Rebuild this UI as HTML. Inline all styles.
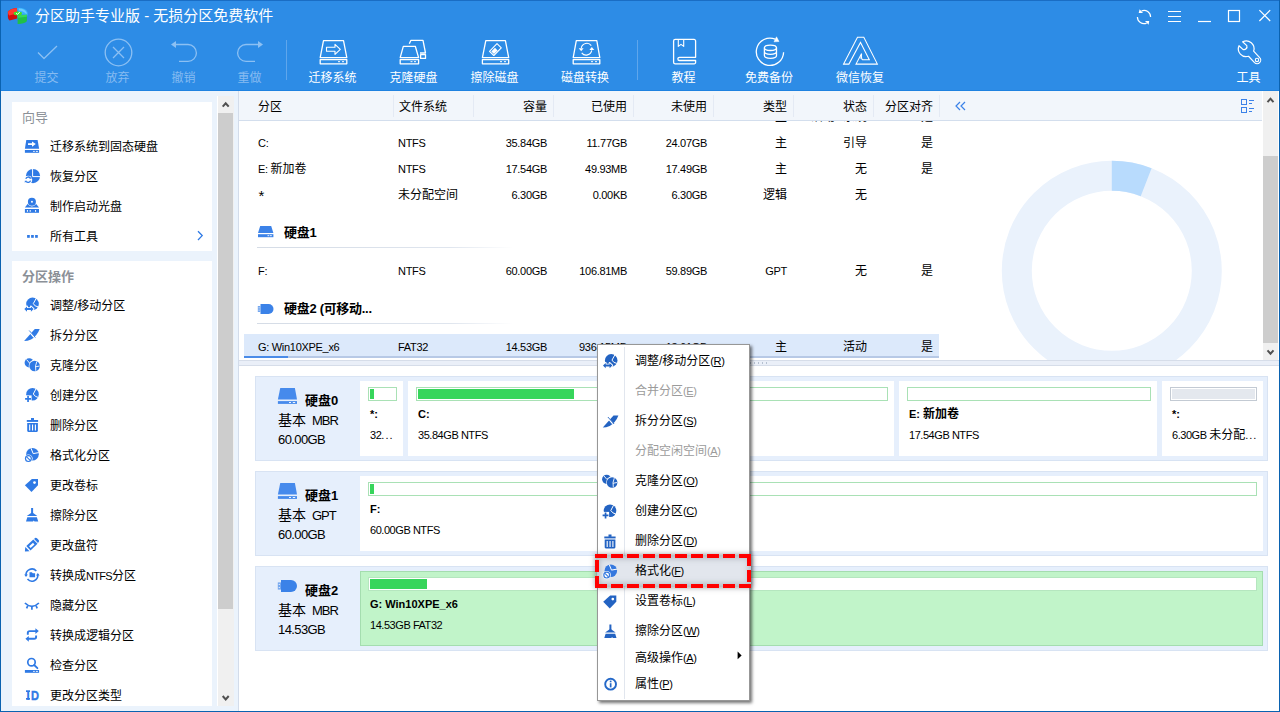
<!DOCTYPE html>
<html lang="zh-CN">
<head>
<meta charset="utf-8">
<title>分区助手专业版 - 无损分区免费软件</title>
<style>
*{box-sizing:border-box;margin:0;padding:0}
html,body{width:1280px;height:712px;overflow:hidden;background:#fff}
body{position:relative;font-family:"Liberation Sans","Noto Sans CJK SC",sans-serif;font-size:12px;color:#000}
.abs{position:absolute}
#win{position:absolute;left:0;top:0;width:1280px;height:712px;overflow:hidden;background:#fff}
/* top bar */
#top{position:absolute;left:0;top:0;width:1280px;height:91px;background:#2d8ce6;border-bottom:1px solid #1f82e0}
#title{position:absolute;left:35px;top:4px;height:24px;line-height:24px;font-size:15px;color:#fff;white-space:nowrap}
.tb{position:absolute;top:67px;height:22px;line-height:22px;font-size:12px;color:#fff;text-align:center;white-space:nowrap;transform:translateX(-50%)}
.tb.dis{color:#86bbf1}
.tsep{position:absolute;top:40px;width:1px;height:40px;background:#5fa6ec}
/* sidebar */
#side{position:absolute;left:1px;top:91px;width:237px;height:620px;background:#ebf3fc}
.panel{position:absolute;left:11px;width:200px;background:#fff}
.ptitle{position:absolute;left:10px;top:6px;height:20px;line-height:20px;font-size:13px;color:#8b9097;white-space:nowrap}
.si{position:absolute;left:38px;margin-top:1px;height:20px;line-height:20px;font-size:12px;color:#000;white-space:nowrap}
.sic{position:absolute;left:11px;width:18px;height:18px}
/* scrollbars */
.sb{position:absolute;background:#f0f0f0}
.thumb{position:absolute;background:#cdcdcd}
/* table */
#thead{position:absolute;left:239px;top:91px;width:1023px;height:30px;background:#f2f6fb;border-bottom:1px solid #d3deed}
.th{position:absolute;top:6px;height:20px;line-height:20px;font-size:12px;white-space:nowrap}
.cs{position:absolute;top:4px;width:1px;height:22px;background:#e4eaf4}
.td{position:absolute;height:20px;line-height:20px;font-size:11px;white-space:nowrap}
.td.c{font-size:12px}
.r{text-align:right}
.dh{font-size:13px;font-weight:bold}
.dpanel{position:absolute;left:255px;width:1013px;height:85px;background:#e6effc;border:1px solid #d8e3f3}
.dn{position:absolute;margin-top:1px;height:20px;line-height:20px;font-size:13px;font-weight:bold;white-space:nowrap}
.dt{position:absolute;height:20px;line-height:20px;font-size:14px;white-space:nowrap}
.dt .l{font-size:13px;letter-spacing:-0.9px;margin-left:2px}
.ds{position:absolute;height:20px;line-height:20px;font-size:13px;letter-spacing:-0.6px;white-space:nowrap}
.pbox{position:absolute;height:75px;background:#fff;overflow:hidden}
.bar{position:absolute;left:8px;right:6px;top:6px;height:14px;border:1px solid #a9e1b5;background:#fff}
.pbox[style*="border"] .bar{right:5px}
.fill{position:absolute;left:1px;top:1px;height:10px;background:#37d55b}
.pl{position:absolute;left:10px;top:23px;height:20px;line-height:20px;font-size:11px;font-weight:bold;white-space:nowrap}
.pd{position:absolute;left:10px;top:44px;height:20px;line-height:20px;font-size:11px;letter-spacing:-0.45px;white-space:nowrap}
.cj{font-size:12px;letter-spacing:0}
.td{letter-spacing:-0.3px}
.td.c,.td .c{letter-spacing:0}
#menu{position:absolute;left:597px;top:344px;width:153px;height:357px;background:#fff;border:1px solid #979797;box-shadow:2px 2px 3px rgba(0,0,0,0.55)}
.mi{position:absolute;left:37px;height:20px;line-height:20px;font-size:12px;white-space:nowrap}
.mi.d{color:#9b9b9b}
.mi .k{font-size:11px;letter-spacing:-0.4px}
.hl{position:absolute;left:-1px;top:211px;width:154px;height:30px;background:#e2e6ed;box-shadow:0 0 5px 2px rgba(90,95,105,0.55), inset 0 0 6px 2px rgba(120,128,140,0.5)}
</style>
</head>
<body>
<div id="win">
<!--TOP-->
<div id="top">
<svg class="abs" style="left:7px;top:7px" width="22" height="18" viewBox="0 0 22 18">
<path d="M10.2 0.7 Q19.4 0.4 20.7 5.6 L20.7 8.6 L10.6 6.6 Z" fill="#36b2fb"/>
<path d="M12 1.6 Q17.6 1.8 19.6 5.4 L19.6 7.6 Q17 4 12 3.4 Z" fill="#6ccbff"/>
<path d="M0.9 4.8 Q3 1.6 9.8 0.9 L10.4 6.5 L10.2 11.4 L2.6 13.6 Q0.9 12 0.9 10 Z" fill="#d20d0d"/>
<path d="M0.9 4.8 Q3 1.6 9.8 0.9 L10.4 6.5 L2.2 8.6 Q0.9 7 0.9 4.8 Z" fill="#ff3a2e"/>
<path d="M10.6 8.2 L20 7.8 L19.9 14.2 Q17 17 10.6 16.9 Z" fill="#20c048"/>
<path d="M10.6 8.2 L20 7.8 L19.9 9.8 L10.6 10.8 Z" fill="#35d75c"/>
<ellipse cx="10.8" cy="6.4" rx="4.2" ry="1.9" fill="#45e023"/>
<path d="M9 6.2 L10.3 7.4 L12.8 5.2" fill="none" stroke="#fff" stroke-width="1"/>
</svg>
<div id="title">分区助手专业版 - 无损分区免费软件</div>
<!-- window controls -->
<svg class="abs" style="left:1130px;top:4px" width="146" height="24" viewBox="1130 4 146 24" fill="none" stroke="#fff" stroke-width="1.2">
<path d="M1141.6 10.9 A6.6 6.6 0 0 1 1150.6 17"/><path d="M1138.7 13 L1143 13 L1139.6 9.2 Z" fill="#fff" stroke="none"/>
<path d="M1137.4 17 A6.6 6.6 0 0 0 1146.6 23.1"/><path d="M1145 21 L1149.2 21 L1148.6 24.8 Z" fill="#fff" stroke="none"/>
<path d="M1168 11.5 H1181 M1168 16.5 H1181 M1168 21.5 H1181"/>
<path d="M1198 21.5 H1211"/>
<rect x="1228.5" y="10.5" width="11" height="11"/>
<path d="M1259.4 10.2 L1270.2 21 M1270.2 10.2 L1259.4 21"/>
</svg>
<!-- toolbar icons -->
<svg class="abs" style="left:0;top:34px" width="1280" height="34" viewBox="0 34 1280 34" fill="none" stroke="#fff" stroke-width="1.3" stroke-linejoin="round">
<g stroke="#8cc0f3">
<path d="M38 52.5 L44 58.5 L57 46"/>
<circle cx="118.5" cy="52.5" r="13.3"/><path d="M113 47 L124 58 M124 47 L113 58"/>
<path d="M175 44.5 H188 A8.4 8.4 0 0 1 188 61.3 H179"/><path d="M171 44.5 L176 41 V48 Z" fill="#8cc0f3" stroke="none"/>
<path d="M259 44.5 H246 A8.4 8.4 0 0 0 246 61.3 H255"/><path d="M263 44.5 L258 41 V48 Z" fill="#8cc0f3" stroke="none"/>
</g>
<!-- migrate -->
<path d="M323.5 40.7 H343.5 L346.8 57.6 H320.2 Z"/><rect x="320.2" y="59.6" width="26.6" height="4.2"/><path d="M338 61.7 h2 M342 61.7 h2" stroke-width="1"/>
<path d="M326.5 47.3 H335 V44.3 L340.3 49.3 L335 54.3 V51.3 H326.5 Z" stroke-width="1.1"/>
<!-- clone -->
<path d="M403.3 46.3 H415.3 L418.6 57.6 H400.2 Z"/><rect x="400.2" y="59.6" width="18.4" height="4.2"/><path d="M410.5 61.7 h2 M414 61.7 h2" stroke-width="1"/>
<path d="M409.3 43.8 L410.8 40.4 H423 L425.5 53 H420"/><rect x="420.6" y="54.6" width="4.9" height="3.8"/>
<!-- erase -->
<path d="M485.8 40.7 H505.4 L508.7 57.6 H482.4 Z"/><rect x="482.4" y="59.6" width="26.3" height="4.2"/><path d="M500 61.7 h2 M504 61.7 h2" stroke-width="1"/>
<path d="M489.5 51.3 L497 43.6 L501.3 47.8 L493.8 55.5 Z" stroke-width="1.1"/><path d="M491.3 51.4 L495 47.8 L497.6 50.4 L494 54 Z" fill="#fff" stroke="none"/>
<!-- convert -->
<path d="M576.3 40.7 H596.8 L599.8 57.6 H573.2 Z"/><rect x="573.2" y="59.6" width="26.6" height="4.2"/><path d="M591 61.7 h2 M595 61.7 h2" stroke-width="1"/>
<path d="M581.3 48 A5.6 5.6 0 0 1 591.3 45.6" stroke-width="1.1"/><path d="M578.7 48.3 L583.6 48.3 L581.2 51.3 Z" fill="#fff" stroke="none"/>
<path d="M591.7 50.4 A5.6 5.6 0 0 1 581.7 52.8" stroke-width="1.1"/><path d="M594.3 50.1 L589.4 50.1 L591.8 47.1 Z" fill="#fff" stroke="none"/>
<!-- book -->
<path d="M695.6 57.3 H679.5 A1.6 1.6 0 0 0 679.5 60.5 H695.6 V62.4 A1.4 1.4 0 0 1 694.2 63.8 H675.2 A1.6 1.6 0 0 1 673.6 62.2 V41 A1.6 1.6 0 0 1 675.2 39.4 H694 A1.6 1.6 0 0 1 695.6 41 Z"/>
<path d="M678.3 39.6 V46.4 L681 44.4 L683.7 46.4 V39.6" stroke-width="1.1"/>
<!-- backup -->
<path d="M783.6 52.2 A13.65 13.65 0 1 1 775.2 39.2"/><path d="M776.5 36.8 L779 41.5 L774 41.8 Z" fill="#fff" stroke="#fff" stroke-width="0.5"/>
<ellipse cx="770.45" cy="47.8" rx="6.05" ry="2.7"/><path d="M764.4 47.8 V55.6 A6.05 2.7 0 0 0 776.5 55.6 V47.8 M764.4 51.6 A6.05 2.7 0 0 0 776.5 51.6"/>
<!-- A -->
<path d="M843.6 64.1 L857.5 37.3 H863.8 L877.4 64.1 H856 L861.6 53.6 Q861 58.4 862.6 59.8 H869.3 L860.5 42.4 L848.9 64.1 Z" stroke-width="1.05" stroke-linejoin="miter"/>
<path d="M861.6 53.6 Q861 58.4 862.6 59.8 Q859.6 59 859.4 57.6 Z" fill="#fff" fill-opacity="0.6" stroke="none"/>
<!-- wrench -->
<path d="M1242.6 41.8 A7.8 7.8 0 0 1 1253.64 51.14 L1259.65 57.55 A3.6 3.6 0 0 1 1254.55 62.65 L1248.54 56.24 A7.8 7.8 0 0 1 1239 45.7 L1242.9 49.4 A3 3 0 0 0 1246.8 45.6 Z" stroke-width="1.2"/>
<circle cx="1257" cy="59.9" r="1.7" stroke-width="1.1"/>
</svg>
<div class="tsep" style="left:286px"></div><div class="tsep" style="left:637px"></div>
<div class="tb dis" style="left:46.5px">提交</div>
<div class="tb dis" style="left:117.5px">放弃</div>
<div class="tb dis" style="left:183.5px">撤销</div>
<div class="tb dis" style="left:249.5px">重做</div>
<div class="tb" style="left:332.5px">迁移系统</div>
<div class="tb" style="left:413.5px">克隆硬盘</div>
<div class="tb" style="left:494.5px">擦除磁盘</div>
<div class="tb" style="left:585px">磁盘转换</div>
<div class="tb" style="left:683.5px">教程</div>
<div class="tb" style="left:769px">免费备份</div>
<div class="tb" style="left:860px">微信恢复</div>
<div class="tb" style="left:1248.5px">工具</div>
</div>
<div class="abs" style="left:0;top:0;width:1280px;height:1px;background:#1a6dc4"></div>
<div class="abs" style="left:0;top:0;width:1px;height:712px;background:#0a62b0"></div>
<div class="abs" style="left:1279px;top:0;width:1px;height:712px;background:#0a62b0"></div>
<div class="abs" style="left:0;top:711px;width:1280px;height:1px;background:#0a62b0"></div>
<!--/TOP-->
<!--SIDE-->
<div class="abs" style="left:1px;top:91px;width:237px;height:620px;background:#ebf3fc"></div>
<div class="abs" style="left:12px;top:102px;width:200px;height:149px;background:#fff"></div>
<div class="abs" style="left:12px;top:261px;width:200px;height:445px;background:#fff"></div>
<div class="abs" style="left:217px;top:96px;width:1px;height:610px;background:#fff"></div>
<div class="sb" style="left:218px;top:96px;width:16px;height:610px"></div>
<div class="thumb" style="left:218px;top:113px;width:15px;height:496px"></div>
<svg class="abs" style="left:218px;top:96px" width="16" height="610" viewBox="0 0 16 610" fill="none" stroke="#505050" stroke-width="2"><path d="M4.7 10.7 L7.7 7.3 L10.7 10.7"/><path d="M4.7 600 L7.7 603.4 L10.7 600"/></svg>
<div class="abs" style="left:238px;top:91px;width:1px;height:620px;background:#d3dcea"></div>
<div class="ptitle" style="left:22px;top:108px">向导</div>
<div class="ptitle" style="left:22px;top:267px;font-weight:bold">分区操作</div>
<div class="si" style="left:50px;top:136px">迁移系统到固态硬盘</div>
<div class="si" style="left:50px;top:166px">恢复分区</div>
<div class="si" style="left:50px;top:196px">制作启动光盘</div>
<div class="si" style="left:50px;top:226px">所有工具</div>
<div class="si" style="left:50px;top:295px">调整/移动分区</div>
<div class="si" style="left:50px;top:325px">拆分分区</div>
<div class="si" style="left:50px;top:355px">克隆分区</div>
<div class="si" style="left:50px;top:385px">创建分区</div>
<div class="si" style="left:50px;top:415px">删除分区</div>
<div class="si" style="left:50px;top:445px">格式化分区</div>
<div class="si" style="left:50px;top:475px">更改卷标</div>
<div class="si" style="left:50px;top:505px">擦除分区</div>
<div class="si" style="left:50px;top:535px">更改盘符</div>
<div class="si" style="left:50px;top:565px">转换成<span style="font-size:11px;letter-spacing:-0.7px">NTFS</span>分区</div>
<div class="si" style="left:50px;top:595px">隐藏分区</div>
<div class="si" style="left:50px;top:625px">转换成逻辑分区</div>
<div class="si" style="left:50px;top:655px">检查分区</div>
<div class="si" style="left:50px;top:685px">更改分区类型</div>
<svg class="abs" style="left:0;top:91px;color:#2f7ae5" width="240" height="621" viewBox="0 91 240 621">
<defs>
<g id="i-pie"><circle cx="0" cy="0" r="6.3" fill="currentColor"/></g>
<g id="i-resize" fill="currentColor"><circle cx="32.5" cy="303.9" r="6.3"/><path d="M36.2 298.4 L33.3 303.6 Q34.6 306.6 38.3 306.9" stroke="#fff" stroke-width="1" fill="none"/><path d="M24.3 309 L27 306.4 V308.1 H30.9 V306.4 L33.6 309 L30.9 311.7 V310 H27 V311.7 Z" stroke="#fff" stroke-width="1.8" stroke-linejoin="round"/><path d="M24.3 309 L27 306.4 V308.1 H30.9 V306.4 L33.6 309 L30.9 311.7 V310 H27 V311.7 Z"/></g>
<g id="i-split" fill="currentColor"><path d="M24.1 341 L34.8 329 L39.7 328.9 Q37 336 31 339.4 Q27.4 341 24.1 341 Z"/><path d="M29.4 331.8 L34.1 337.1" stroke="#fff" stroke-width="1.6"/><path d="M29.2 330.5 L35.4 337.5" stroke="currentColor" stroke-width="0.9"/></g>
<g id="i-clone" fill="currentColor"><circle cx="29.2" cy="362.8" r="4.6"/><path d="M26.5 359.5 L29.5 363 M29.5 363 L33 360" stroke="#fff" stroke-width="0.9" fill="none"/><circle cx="34.6" cy="366" r="5.9" fill="#fff"/><circle cx="34.6" cy="366" r="5.3"/><path d="M36.8 361.6 Q34.8 365.6 35.8 370.8 M35.4 366.8 L39.6 366" stroke="#fff" stroke-width="0.9" fill="none"/></g>
<g id="i-create" fill="currentColor"><circle cx="32.5" cy="394.2" r="6.3"/><path d="M36 388.8 L33.3 394 Q35 397 38.2 397.4" stroke="#fff" stroke-width="1" fill="none"/><path d="M24.4 395.4 H31.6 V402.4 H24.4 Z" fill="#fff"/><path d="M27.2 396 H28.9 V398.1 H31 V399.8 H28.9 V401.9 H27.2 V399.8 H25.1 V398.1 H27.2 Z"/></g>
<g id="i-trash" fill="currentColor"><rect x="31" y="418" width="3" height="2.4"/><rect x="26.8" y="420" width="11.3" height="1.9"/><path d="M27.2 423 H37.9 V430.8 Q37.9 431.9 36.8 431.9 H28.3 Q27.2 431.9 27.2 430.8 Z"/><path d="M29.7 424.4 V430.4 M32.55 424.4 V430.4 M35.4 424.4 V430.4" stroke="#fff" stroke-width="1.1"/></g>
<g id="i-format" fill="currentColor"><circle cx="32.5" cy="454.2" r="6.3"/><path d="M31 448.2 L33.2 453.6 L38.8 452.6" stroke="#fff" stroke-width="1" fill="none"/><circle cx="28.4" cy="458.6" r="4.2" fill="#fff"/><circle cx="28.4" cy="458.6" r="3.5"/><circle cx="28.4" cy="458.6" r="2.3" fill="#fff"/><path d="M26.6 456.9 L30.2 460.3" stroke="currentColor" stroke-width="1.1"/></g>
<g id="i-tag" fill="currentColor"><path d="M24.9 485.3 L31.9 479.1 H38 V485.2 L31.5 491.9 Z"/><circle cx="34.5" cy="482.6" r="1.35" fill="#fff"/></g>
<g id="i-wipe" fill="currentColor"><rect x="31.1" y="508" width="2" height="6"/><path d="M26.8 515.9 L31.4 512.8 H32.8 L37.3 515.9 Z"/><path d="M27.3 517.3 H36.9 L38.2 521.6 H34.5 L33.8 520.6 L33 521.6 H26 Z"/></g>
</defs>
<g fill="#2f7ae5">
<!-- migrate -->
<path d="M26.3 139.9 H37.6 L39.1 148.7 H24.9 Z"/><rect x="24.9" y="150" width="14.2" height="2.8"/><path d="M33.1 151.4 h1.7 M35.9 151.4 h2" stroke="#fff" stroke-width="0.9"/>
<path d="M28 143.2 H32 V141.4 L35.8 144.1 L32 146.8 V145 H28 Z" fill="#fff"/>
<!-- recover -->
<circle cx="33" cy="176.1" r="7.1"/><path d="M32.6 168.6 V176.6 H40.4" stroke="#fff" stroke-width="1" fill="none"/>
<circle cx="28.2" cy="179.7" r="4" fill="#fff"/><path d="M25.8 178.8 A2.6 2.6 0 0 1 30.3 178 M30.6 180.6 A2.6 2.6 0 0 1 26.1 181.4" stroke="#2f7ae5" stroke-width="1.3" fill="none"/><path d="M29.3 178.7 H31.6 V176.6 Z M27.1 180.7 H24.8 V182.8 Z"/>
<!-- boot disc -->
<path d="M24.9 207.5 L28 203.6 H35.8 L39 207.5 Z"/><circle cx="31.9" cy="201.7" r="4.7" fill="#fff"/><circle cx="31.9" cy="201.7" r="4"/><rect x="31.1" y="200.9" width="1.7" height="1.7" fill="#fff"/>
<rect x="24.9" y="209" width="14.1" height="3.8"/><path d="M27.4 210 v1.8 M30.2 210 v1.8 M35.6 210 v1.8" stroke="#fff" stroke-width="1"/>
<!-- dots -->
<rect x="27.1" y="235" width="2.7" height="2.8"/><rect x="31.1" y="235" width="2.7" height="2.8"/><rect x="35.1" y="235" width="2.7" height="2.8"/>
<path d="M198 231.2 L202.2 235.6 L198 240" stroke="#2f7ae5" stroke-width="1.3" fill="none"/>
</g>
<use href="#i-resize"/><use href="#i-split"/><use href="#i-clone"/><use href="#i-create"/><use href="#i-trash"/><use href="#i-format"/><use href="#i-tag"/><use href="#i-wipe"/>
<g fill="#2f7ae5">
<!-- pencil -->
<path d="M24.9 551.5 L25.3 547 L29.6 551.2 Z"/><path d="M26.3 545.9 L33.3 539.6 L37.5 543.8 L30.5 550.5 Z"/><path d="M29.1 546.3 L33 542.8 L34.5 544.4 L30.6 547.9 Z" fill="#fff"/><path d="M34.1 538.9 L35 538.1 Q36 537.4 37 538.3 L38.7 540 Q39.5 541 38.7 542 L38 542.9 Z"/>
<!-- ntfs -->
<path d="M26.05 575.4 A5.85 5.85 0 0 1 36.3 571 M37.75 574.7 A5.85 5.85 0 0 1 27.5 579.1" stroke="#2f7ae5" stroke-width="1.6" fill="none"/><path d="M24.2 574.6 H27.9 L26 577.1 Z M36 575.5 H39.7 L37.8 573 Z"/><path d="M29.5 572.3 H31.9 L32.7 573.3 H35.1 V577.2 H29.5 Z"/>
<!-- hide -->
<path d="M24.9 603 Q31.9 609.8 38.9 603 M27.6 606 L26.6 608.4 M31.9 607 V609.8 M36.2 606 L37.2 608.4" stroke="#2f7ae5" stroke-width="1.7" fill="none"/>
<!-- logical -->
<path d="M27.8 634.8 V633 Q27.8 631.1 29.7 631.1 H36 M36.1 635.4 V637 Q36.1 638.8 34.2 638.8 H28" stroke="#2f7ae5" stroke-width="1.9" fill="none"/><path d="M35.4 628.2 L38.8 631.1 L35.4 634 Z M28.8 635.9 L25.4 638.8 L28.8 641.7 Z"/>
<!-- check -->
<circle cx="31.5" cy="662.2" r="3.7" stroke="#2f7ae5" stroke-width="1.7" fill="none"/><path d="M34.2 665 L37.4 668.2" stroke="#2f7ae5" stroke-width="1.8" stroke-linecap="round"/><rect x="24.9" y="670" width="14.2" height="2.8"/><path d="M33.1 671.4 h1.7 M35.9 671.4 h2" stroke="#fff" stroke-width="0.9"/>
<text x="26.2" y="699.7" font-family="Liberation Sans, sans-serif" font-weight="bold" font-size="13.1" fill="#2f7ae5">I</text><rect x="26" y="690.3" width="4" height="1.7"/><rect x="26" y="698" width="4" height="1.7"/><text x="30.9" y="699.7" font-family="Liberation Sans, sans-serif" font-weight="bold" font-size="13.1" textLength="8" lengthAdjust="spacingAndGlyphs" fill="#2f7ae5" stroke="#2f7ae5" stroke-width="0.4">D</text>
</g>
</svg>
<!--/SIDE-->
<!--TABLE-->
<div id="thead">
<div class="cs" style="left:154px"></div><div class="cs" style="left:234px"></div><div class="cs" style="left:314px"></div><div class="cs" style="left:394px"></div><div class="cs" style="left:474px"></div><div class="cs" style="left:554px"></div><div class="cs" style="left:634px"></div><div class="cs" style="left:700px"></div>
<div class="th" style="left:19px">分区</div>
<div class="th" style="left:160px">文件系统</div>
<div class="th r" style="left:234px;width:74px">容量</div>
<div class="th r" style="left:314px;width:74px">已使用</div>
<div class="th r" style="left:394px;width:74px">未使用</div>
<div class="th r" style="left:474px;width:74px">类型</div>
<div class="th r" style="left:554px;width:74px">状态</div>
<div class="th" style="left:646px">分区对齐</div>
<svg class="abs" style="left:715px;top:10px" width="14" height="10" viewBox="0 0 14 10" fill="none" stroke="#3b82e8" stroke-width="1.2"><path d="M6 1 L2 5 L6 9 M11 1 L7 5 L11 9"/></svg>
<svg class="abs" style="left:1001px;top:7px" width="16" height="16" viewBox="0 0 16 16" fill="none" stroke="#3b82e8" stroke-width="1"><rect x="1.5" y="1.5" width="5" height="5"/><rect x="1.5" y="9.5" width="5" height="5"/><path d="M9 2.5 h5 M9 5.5 h3 M9 10.5 h5 M9 13.5 h3" stroke-width="1.1"/></svg>
</div>
<div id="tbody" class="abs" style="left:239px;top:121px;width:1023px;height:239px;overflow:hidden;background:#fff">
<svg class="abs" style="left:747px;top:30px" width="250" height="240" viewBox="986 151 250 240"><circle cx="1111.8" cy="270.8" r="95" fill="none" stroke="#eaf2fc" stroke-width="30"/><path d="M1111.8 160.8 A110 110 0 0 1 1151.6 168.2 L1140.7 196.2 A80 80 0 0 0 1111.8 190.8 Z" fill="#b8dbfd"/></svg>
<div class="sel abs" style="left:5px;top:213px;width:695px;height:24px;background:#dce9fb"></div>
<div class="abs" style="left:5px;top:235px;width:695px;height:2px;background:#b7c9e6"></div>
<div class="abs" style="left:5px;top:235px;width:44px;height:2px;background:#4a8be8"></div>
<!-- clipped row -->
<div class="td c r" style="left:474px;top:-14px;width:74px">主</div><div class="td c r" style="left:534px;top:-14px;width:94px">活动&amp;系统</div><div class="td c" style="left:682px;top:-14px">是</div>
<!-- C -->
<div class="td" style="left:19px;top:12px">C:</div><div class="td" style="left:159px;top:12px">NTFS</div><div class="td r" style="left:234px;top:12px;width:74px">35.84GB</div><div class="td r" style="left:314px;top:12px;width:74px">11.77GB</div><div class="td r" style="left:394px;top:12px;width:74px">24.07GB</div><div class="td c r" style="left:474px;top:12px;width:74px">主</div><div class="td c r" style="left:554px;top:12px;width:74px">引导</div><div class="td c" style="left:682px;top:12px">是</div>
<!-- E -->
<div class="td" style="left:19px;top:38px">E: <span class="c" style="font-size:12px">新加卷</span></div><div class="td" style="left:159px;top:38px">NTFS</div><div class="td r" style="left:234px;top:38px;width:74px">17.54GB</div><div class="td r" style="left:314px;top:38px;width:74px">49.93MB</div><div class="td r" style="left:394px;top:38px;width:74px">17.49GB</div><div class="td c r" style="left:474px;top:38px;width:74px">主</div><div class="td c r" style="left:554px;top:38px;width:74px">无</div><div class="td c" style="left:682px;top:38px">是</div>
<!-- * -->
<div class="td" style="left:19.5px;top:64.5px;font-size:15px">*</div><div class="td c" style="left:159px;top:64px">未分配空间</div><div class="td r" style="left:234px;top:64px;width:74px">6.30GB</div><div class="td r" style="left:314px;top:64px;width:74px">0.00KB</div><div class="td r" style="left:394px;top:64px;width:74px">6.30GB</div><div class="td c r" style="left:474px;top:64px;width:74px">逻辑</div><div class="td c r" style="left:554px;top:64px;width:74px">无</div>
<!-- disk1 -->
<svg class="abs" style="left:18px;top:104px" width="18" height="14" viewBox="0 0 18 14" fill="#3b82e8"><path d="M3.2 1 H14.2 L16.4 8 H1 Z"/><rect x="1" y="9.2" width="15.4" height="3"/><path d="M10.5 10.7 h1.8 M13 10.7 h1.8" stroke="#fff" stroke-width="0.9"/></svg>
<div class="td dh" style="left:45px;top:102px">硬盘1</div>
<div class="abs" style="left:18px;top:126px;width:256px;height:1px;background:linear-gradient(90deg,#d5dce6 0%,#dfe5ee 75%,#fff 100%)"></div>
<div class="td" style="left:19px;top:140px">F:</div><div class="td" style="left:159px;top:140px">NTFS</div><div class="td r" style="left:234px;top:140px;width:74px">60.00GB</div><div class="td r" style="left:314px;top:140px;width:74px">106.81MB</div><div class="td r" style="left:394px;top:140px;width:74px">59.89GB</div><div class="td r" style="left:474px;top:140px;width:74px">GPT</div><div class="td c r" style="left:554px;top:140px;width:74px">无</div><div class="td c" style="left:682px;top:140px">是</div>
<!-- disk2 -->
<svg class="abs" style="left:18px;top:182px" width="18" height="12" viewBox="0 0 18 12" fill="#3b82e8"><path d="M3.5 1 H11.5 A5 5 0 0 1 11.5 11 H3.5 Z"/><rect x="0.8" y="3" width="2.7" height="6" fill="#74a7ef"/><path d="M1.6 4.8 h1 M1.6 7.2 h1" stroke="#fff" stroke-width="0.8"/></svg>
<div class="td dh" style="left:45px;top:178px">硬盘2 (可移动...</div>
<div class="abs" style="left:18px;top:202px;width:256px;height:1px;background:linear-gradient(90deg,#d5dce6 0%,#dfe5ee 75%,#fff 100%)"></div>
<div class="td" style="left:19px;top:216px">G: Win10XPE_x6</div><div class="td" style="left:159px;top:216px">FAT32</div><div class="td r" style="left:234px;top:216px;width:74px">14.53GB</div><div class="td" style="left:340px;top:216px">936.15MB</div><div class="td r" style="left:394px;top:216px;width:74px">13.61GB</div><div class="td c r" style="left:474px;top:216px;width:74px">主</div><div class="td c r" style="left:554px;top:216px;width:74px">活动</div><div class="td c" style="left:682px;top:216px">是</div>
</div>
<!-- right scrollbar -->
<div class="sb" style="left:1263px;top:91px;width:15px;height:269px"></div>
<div class="thumb" style="left:1263px;top:156px;width:15px;height:187px"></div>
<svg class="abs" style="left:1263px;top:91px" width="15" height="269" viewBox="0 0 15 269" fill="none" stroke="#505050" stroke-width="2"><path d="M4.5 11.1 L7.5 7.7 L10.5 11.1"/><path d="M4.5 259.3 L7.5 262.7 L10.5 259.3"/></svg>
<!-- splitter -->
<div class="abs" style="left:239px;top:360px;width:1040px;height:6px;background:#eaeff8;border-top:1px solid #d6dde9;border-bottom:1px solid #d6dde9"></div>
<div class="abs" style="left:750px;top:362px;width:1px;height:2px;background:#b5c0d0;box-shadow:4px 0 0 #b5c0d0,8px 0 0 #b5c0d0,12px 0 0 #b5c0d0,16px 0 0 #b5c0d0"></div>
<!--/TABLE-->
<!--DISKS-->
<div class="dpanel" style="top:376px"></div>
<div class="dpanel" style="top:471px"></div>
<div class="dpanel" style="top:566px"></div>
<!-- disk0 -->
<svg class="abs" style="left:277px;top:387px" width="21" height="18" viewBox="0 0 21 18" fill="#468aec"><path d="M3.25 0.9 H17.9 L20 12.6 H0.9 Z"/><rect x="0.9" y="14.1" width="19.1" height="2.8"/><path d="M12 15.5 h2 M15.8 15.5 h2.4" stroke="#fff" stroke-width="0.9"/></svg>
<div class="dn" style="left:305px;top:390px">硬盘0</div>
<div class="dt" style="left:278px;top:410px">基本 <span class="l">MBR</span></div>
<div class="ds" style="left:278px;top:430px">60.00GB</div>
<div class="pbox" style="left:360px;top:381px;width:43px"><div class="bar"><div class="fill" style="width:4px"></div></div><div class="pl">*:</div><div class="pd">32<span style="letter-spacing:1px">...</span></div></div>
<div class="pbox" style="left:408px;top:381px;width:486px"><div class="bar"><div class="fill" style="width:156px"></div></div><div class="pl">C:</div><div class="pd">35.84GB NTFS</div></div>
<div class="pbox" style="left:899px;top:381px;width:258px"><div class="bar"></div><div class="pl">E: <span class="cj">新加卷</span></div><div class="pd">17.54GB NTFS</div></div>
<div class="pbox" style="left:1162px;top:381px;width:101px"><div class="bar" style="background:#e4e8ee;border-color:#c3cad3;box-shadow:inset 0 0 0 1px #fff"></div><div class="pl">*:</div><div class="pd">6.30GB <span class="cj">未分配</span><span style="letter-spacing:1px">...</span></div></div>
<!-- disk1 -->
<svg class="abs" style="left:277px;top:482px" width="21" height="18" viewBox="0 0 21 18" fill="#468aec"><path d="M3.25 0.9 H17.9 L20 12.6 H0.9 Z"/><rect x="0.9" y="14.1" width="19.1" height="2.8"/><path d="M12 15.5 h2 M15.8 15.5 h2.4" stroke="#fff" stroke-width="0.9"/></svg>
<div class="dn" style="left:305px;top:485px">硬盘1</div>
<div class="dt" style="left:278px;top:505px">基本 <span class="l">GPT</span></div>
<div class="ds" style="left:278px;top:525px">60.00GB</div>
<div class="pbox" style="left:360px;top:476px;width:903px"><div class="bar"><div class="fill" style="width:4px"></div></div><div class="pl">F:</div><div class="pd">60.00GB NTFS</div></div>
<!-- disk2 -->
<svg class="abs" style="left:277px;top:579px" width="22" height="14" viewBox="0 0 22 14" fill="#3b82e8"><path d="M4 1 H14 A6 6 0 0 1 14 13 H4 Z"/><rect x="0.8" y="3.4" width="3.2" height="7.2" fill="#74a7ef"/><path d="M1.7 5.4 h1.2 M1.7 8.6 h1.2" stroke="#fff" stroke-width="0.9"/></svg>
<div class="dn" style="left:305px;top:580px">硬盘2</div>
<div class="dt" style="left:278px;top:600px">基本 <span class="l">MBR</span></div>
<div class="ds" style="left:278px;top:620px">14.53GB</div>
<div class="pbox" style="left:360px;top:571px;width:903px;background:#c1f4c9;border:1px solid #a4ddaf"><div class="bar" style="left:7px;top:5px;background:#fff;border-color:#b5e6bf"><div class="fill" style="width:57px"></div></div><div class="pl" style="left:9px;top:22px">G: Win10XPE_x6</div><div class="pd" style="left:9px;top:43px">14.53GB FAT32</div></div>
<!--/DISKS-->
<!--MENU-->
<div id="menu">
<div class="abs" style="left:26px;top:2px;width:1px;height:352px;background:#e1e6ee"></div>
<div class="mi" style="top:6px">调整/移动分区<span class="k">(<u>R</u>)</span></div>
<div class="mi d" style="top:36px">合并分区<span class="k">(<u>E</u>)</span></div>
<div class="mi" style="top:66px">拆分分区<span class="k">(<u>S</u>)</span></div>
<div class="mi d" style="top:96px">分配空闲空间<span class="k">(<u>A</u>)</span></div>
<div class="mi" style="top:126px">克隆分区<span class="k">(<u>O</u>)</span></div>
<div class="mi" style="top:156px">创建分区<span class="k">(<u>C</u>)</span></div>
<div class="mi" style="top:186px">删除分区<span class="k">(<u>D</u>)</span></div>
<div class="hl"></div>
<div class="mi" style="top:216px">格式化<span class="k">(<u>F</u>)</span></div>
<div class="mi" style="top:246px">设置卷标<span class="k">(<u>L</u>)</span></div>
<div class="mi" style="top:276px">擦除分区<span class="k">(<u>W</u>)</span></div>
<div class="mi" style="top:303px">高级操作<span class="k">(<u>A</u>)</span></div>
<div class="mi" style="top:329px">属性<span class="k">(<u>P</u>)</span></div>
<svg class="abs" style="left:139px;top:306px" width="6" height="9" viewBox="0 0 6 9"><path d="M0.6 0.6 L4.6 4.4 L0.6 8.2 Z" fill="#000"/></svg>
</div>
<svg class="abs" style="left:590px;top:340px;color:#2363c2" width="170" height="365" viewBox="590 340 170 365">
<g class="mic" transform="translate(0 0.1)">
<use href="#i-resize" transform="translate(578.7 56.4)"/>
<use href="#i-split" transform="translate(578.7 86.4)"/>
<use href="#i-clone" transform="translate(577.5 116.4)"/>
<use href="#i-create" transform="translate(577.5 116.4)"/>
<use href="#i-trash" transform="translate(577.5 116.4)"/>
<use href="#i-format" transform="translate(578.3 116.4)" style="color:#3578de"/>
<use href="#i-tag" transform="translate(578.3 116.4)"/>
<use href="#i-wipe" transform="translate(578.3 116.4)"/>
</g>
<circle cx="610.6" cy="684.2" r="5.4" fill="#fff" stroke="#2468c8" stroke-width="1.9"/><rect x="609.8" y="683.2" width="1.7" height="4.2" fill="#2468c8"/><rect x="609.8" y="680.6" width="1.7" height="1.7" fill="#2468c8"/>
<!-- red dashed -->
<g fill="#ff0000">
<rect x="595" y="554" width="12" height="4"/><rect x="611" y="554" width="12" height="4"/><rect x="627" y="554" width="12" height="4"/><rect x="643" y="554" width="12" height="4"/><rect x="659" y="554" width="12" height="4"/><rect x="675" y="554" width="12" height="4"/><rect x="691" y="554" width="12" height="4"/><rect x="707" y="554" width="12" height="4"/><rect x="723" y="554" width="12" height="4"/><rect x="739" y="554" width="12" height="4"/>
<rect x="595" y="584" width="12" height="4"/><rect x="611" y="584" width="12" height="4"/><rect x="627" y="584" width="12" height="4"/><rect x="643" y="584" width="12" height="4"/><rect x="659" y="584" width="12" height="4"/><rect x="675" y="584" width="12" height="4"/><rect x="691" y="584" width="12" height="4"/><rect x="707" y="584" width="12" height="4"/><rect x="723" y="584" width="12" height="4"/><rect x="739" y="584" width="12" height="4"/>
<rect x="595" y="560" width="4" height="12"/><rect x="595" y="576" width="4" height="12"/>
<rect x="747" y="554" width="4" height="12"/><rect x="747" y="570" width="4" height="12"/>
</g>
</svg>
<!--/MENU-->
</div>
</body>
</html>
